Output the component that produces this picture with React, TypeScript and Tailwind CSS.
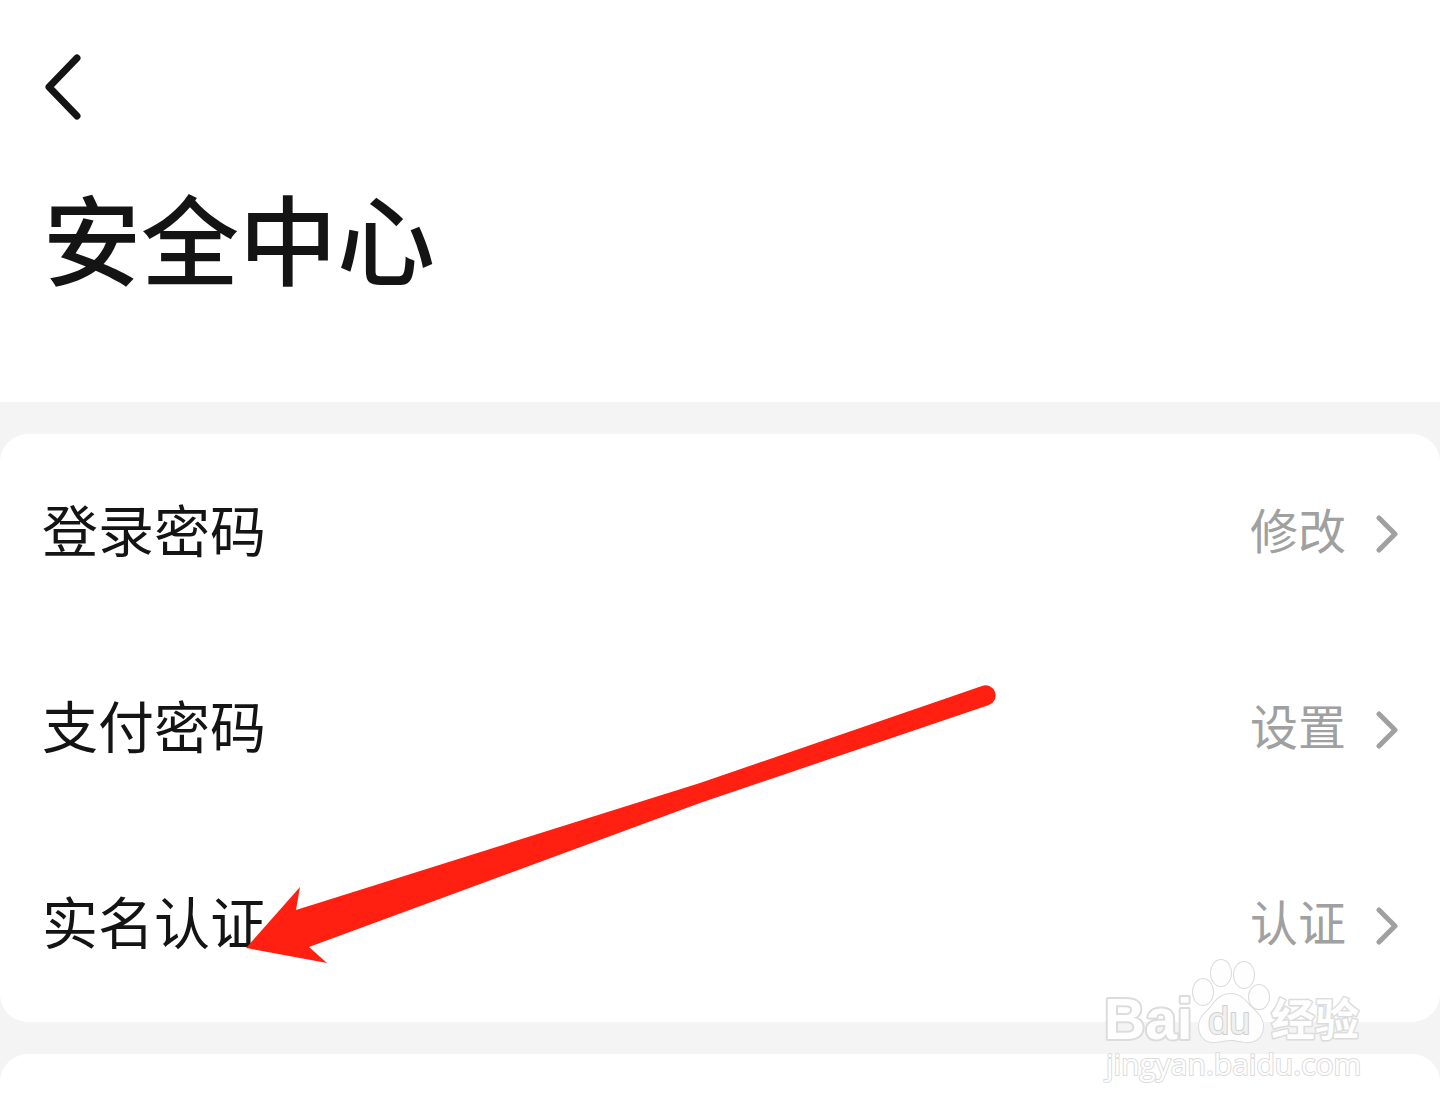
const rows = [
  { name: "登录密码", action: "修改" },
  { name: "支付密码", action: "设置" },
  { name: "实名认证", action: "认证" },
];

function Arrow() {
  return (
    <svg className="absolute left-[240px] top-[246px] pointer-events-none" width="760" height="290" viewBox="240 680 760 290" aria-hidden="true">
      <path d="M246 948 L300 887 L296 910 L700 783 L982 686 A10 10 0 0 1 989 705 L700 803 L309 947 L327 963 Z" fill="#ff2012" />
    </svg>
  );
}

function Watermark() {
  return (
    <svg className="absolute right-[72px] bottom-[24px] pointer-events-none" width="268" height="136" viewBox="1100 954 268 136" aria-hidden="true">
      <g fill="#fefefe" stroke="#dcdcdc" strokeWidth="2" paintOrder="stroke" strokeLinejoin="round">
        <text x="1104" y="1039" fontFamily="'Liberation Sans', Arial, sans-serif" fontWeight="700" fontSize="57" strokeWidth="4">Bai</text>
        <ellipse cx="1203" cy="992" rx="10" ry="13" />
        <ellipse cx="1221" cy="973" rx="10" ry="13" />
        <ellipse cx="1244" cy="975" rx="10" ry="13" />
        <ellipse cx="1259" cy="997" rx="10" ry="12" />
        <path d="M1231 994 C1240 994 1245 1000 1250 1006 C1256 1012 1263 1017 1263 1026 C1263 1036 1257 1042 1248 1042 C1241 1042 1237 1040 1231 1040 C1225 1040 1220 1042 1213 1042 C1204 1042 1199 1035 1199 1026 C1199 1017 1206 1013 1211 1007 C1216 1000 1221 994 1231 994 Z" />
        <text x="1208" y="1034" fontFamily="'Liberation Sans', Arial, sans-serif" fontSize="38" fill="#f0f0f0" stroke="#cfcfcf">du</text>
        <text x="1271" y="1036" fontFamily="'Noto Sans CJK SC', sans-serif" fontWeight="700" fontSize="44" strokeWidth="3">经验</text>
        <text x="1106" y="1075" fontFamily="'Open Sans', sans-serif" fontSize="30">jingyan.baidu.com</text>
      </g>
    </svg>
  );
}

export default function App() {
  return (
    <div className="relative flex flex-col gap-8 min-h-screen bg-[#f4f4f4] text-[#141414] font-['Liberation_Sans','Noto_Sans_CJK_SC',sans-serif]">
      <header className="bg-white px-[43px] pt-[52px] pb-[86px]">
        <button type="button" aria-label="返回" className="block">
          <svg width="40" height="70" viewBox="0 0 40 70" fill="none" stroke="currentColor" strokeWidth="7" strokeLinecap="round" strokeLinejoin="round">
            <path d="M34 6 L6 35 L34 64" />
          </svg>
        </button>
        <h1 className="mt-[50px] text-[98px] leading-[144px] font-medium">安全中心</h1>
      </header>
      <main className="flex flex-col gap-8 grow">
        <section className="relative bg-white rounded-[28px]">
          <ul>
            {rows.map((row) => (
              <li key={row.name}>
                <button type="button" className="flex items-center w-full h-[196px] px-[42px] pt-[2px] text-left">
                  <span className="grow text-[56px] leading-[80px]">{row.name}</span>
                  <span className="text-5xl text-[#a0a0a0]">{row.action}</span>
                  <svg className="ml-[30px] text-[#a0a0a0]" width="22" height="40" viewBox="0 0 22 40" fill="none" stroke="currentColor" strokeWidth="5" strokeLinecap="round" strokeLinejoin="round">
                    <path d="M3 5 L19 21 L3 37" />
                  </svg>
                </button>
              </li>
            ))}
          </ul>
          <Arrow />
        </section>
        <section className="grow min-h-[60px] bg-white rounded-t-[28px]"></section>
      </main>
      <Watermark />
    </div>
  );
}
